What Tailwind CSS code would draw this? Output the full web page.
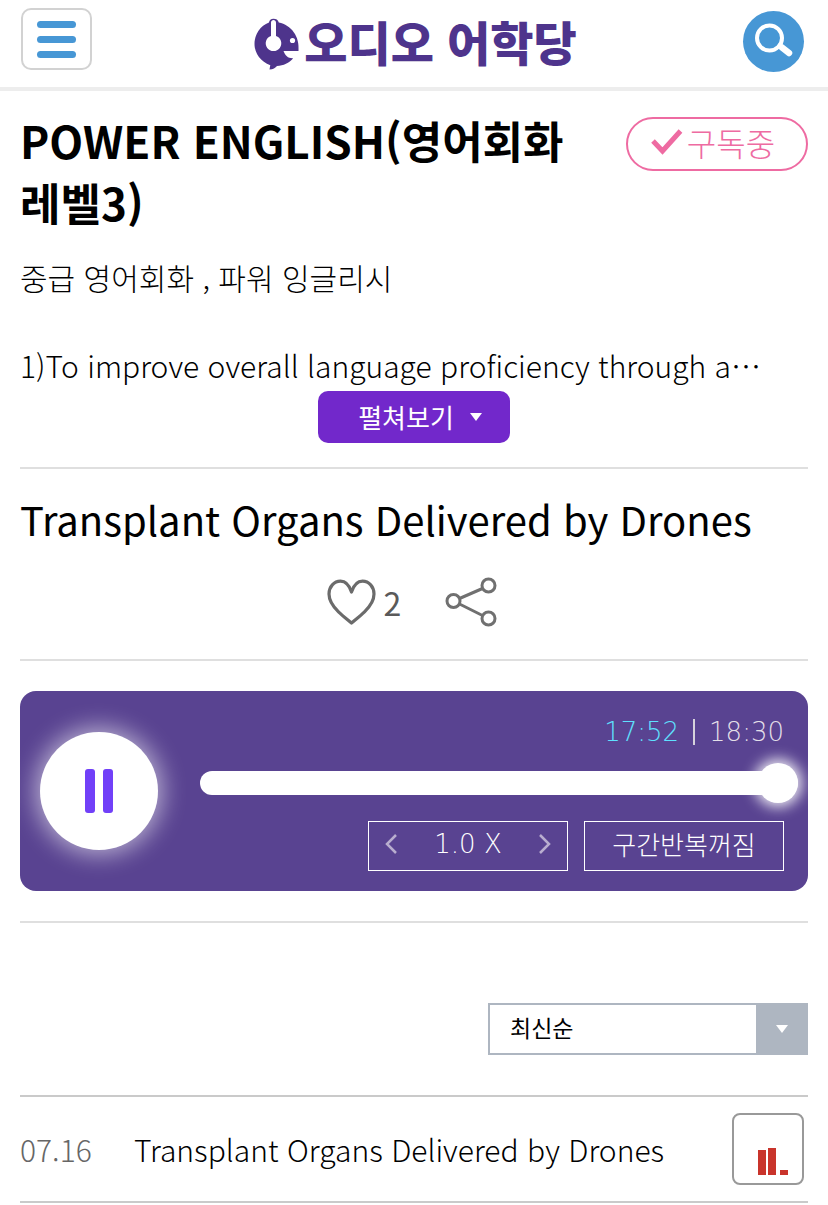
<!DOCTYPE html>
<html lang="ko">
<head>
    <meta charset="UTF-8">
    <meta name="viewport" content="width=device-width, initial-scale=1.0">
    <title>오디오 어학당</title>
    <script src="https://cdn.jsdelivr.net/npm/@tailwindcss/browser@4"></script>
</head>
<body class="bg-white text-black font-['Noto_Sans_CJK_KR',sans-serif]">
    <!-- Header -->
    <header class="flex items-start justify-between h-[91px] pt-2 pl-[21px] pr-6 border-b-4 border-[#ededed]">
        <button type="button" aria-label="메뉴" class="flex flex-col items-center justify-center gap-2 w-[71px] h-[62px] rounded-[10px] border-2 border-[#d2d2d2]">
            <span class="w-[39px] h-[7px] rounded-full bg-[#4797d5]"></span>
            <span class="w-[39px] h-[7px] rounded-full bg-[#4797d5]"></span>
            <span class="w-[39px] h-[7px] rounded-full bg-[#4797d5]"></span>
        </button>
        <a href="#" class="flex items-start gap-1 pt-2 pr-1 text-[#4e348c]">
            <svg class="mt-[2px] w-[46px] h-[53px]" viewBox="0 0 46 53" aria-hidden="true">
                <path fill="currentColor" d="M15 4.600C6.500 7.700.5 16.300.5 26c0 9.500 6.500 18 15.800 21.200l-.8 4.300c3.500-.3 6-1.700 7.500-3.600 6.600-.2 12-3 16.200-7.700-5 .3-8-2.400-9.700-7.200h15c1.500-15-7.500-26-19.700-28.600C24 1.800 22 .7 19.500.7S15.200 2 15 4.600z"/>
                <path fill="#fff" d="M17 4.800c0-3.600 5-3.600 5 0v13.100a7.800 7.800 0 1 1-5 0z"/>
                <circle cx="38.500" cy="22.500" r="2.600" fill="#fff"/>
            </svg>
            <span class="text-[47px] leading-[50px] font-black">오디오 어학당</span>
        </a>
        <button type="button" aria-label="검색" class="mt-[3px] w-[61px] h-[61px] rounded-full bg-[#4797d5]">
            <svg class="w-full h-full" viewBox="0 0 61 61" fill="none" stroke="#fff">
                <circle cx="26.500" cy="27" r="12.500" stroke-width="4"/>
                <path stroke-width="3.500" d="M35 33.500l4 3.500"/>
                <path stroke-width="6.500" stroke-linecap="round" d="M39 36.500l7 5.500"/>
            </svg>
        </button>
    </header>

    <main class="px-5">
        <!-- Course info -->
        <section class="pt-[18px] pb-6 border-b-2 border-[#dfdfdf]">
            <div class="flex items-start justify-between">
                <h1 class="w-[560px] text-[44px] leading-[62px] font-bold">POWER ENGLISH(영어회화 레벨3)</h1>
                <button type="button" class="flex items-center justify-center gap-1 mt-2 pr-2 pb-1 w-[182px] h-[54px] rounded-full border-2 border-[#ee6ba2] text-[32px] leading-[48px] font-light text-[#ee6ba2]">
                    <svg class="w-8 h-8" viewBox="0 0 32 32" fill="none" stroke="currentColor" stroke-width="5"><path d="M2 15l9.500 10L29.500 5"/></svg>
                    구독중
                </button>
            </div>
            <p class="mt-[22px] text-[30px] leading-[44px] font-light">중급 영어회화 , 파워 잉글리시</p>
            <p class="mt-11 pb-1 text-[30px] leading-[44px] font-light">1)To improve overall language proficiency through a…</p>
            <button type="button" class="flex items-center justify-center gap-4 mx-auto pl-3 w-[192px] h-[52px] rounded-[10px] bg-[#7228cb] text-[26px] leading-[52px] text-white">
                펼쳐보기
                <svg class="w-3 h-2" viewBox="0 0 12 8" fill="currentColor"><path d="M0 0h12L6 8z"/></svg>
            </button>
        </section>

        <!-- Episode -->
        <section class="pt-5 pb-8 border-b-2 border-[#dfdfdf]">
            <h2 class="text-[40px] leading-[60px]">Transplant Organs Delivered by Drones</h2>
            <div class="flex items-center justify-center gap-11 mt-7 pr-1">
                <button type="button" class="flex items-center gap-2 text-[32px] leading-[50px] text-[#5a5a5a]">
                    <svg class="w-[49px] h-[46px]" viewBox="0 0 49 46" fill="none" stroke="#6b6b6b" stroke-width="3.200" stroke-linejoin="round"><path d="M24.500 13C22 5.500 18 2.200 13.500 2.200 7 2.200 2 7.800 2 15c0 7 3.500 12 9.500 17.800 4 3.900 8.500 7.400 13 11.200 4.500-3.800 9-7.300 13-11.200C43.500 27 47 22 47 15c0-7.200-5-12.800-11.500-12.800-4.500 0-8.500 3.300-11 10.800z"/></svg>
                    2
                </button>
                <button type="button" aria-label="공유">
                    <svg class="w-[52px] h-[50px]" viewBox="0 0 52 50" fill="none" stroke="#707070" stroke-width="3">
                        <circle cx="8.500" cy="24" r="6.500"/>
                        <circle cx="43.500" cy="8.500" r="6.500"/>
                        <circle cx="43.500" cy="41.500" r="6.500"/>
                        <path d="M14.500 21.500l23-10M14.500 27l23 11.500"/>
                    </svg>
                </button>
            </div>
        </section>

        <!-- Player -->
        <section class="py-[30px] border-b-2 border-[#dfdfdf]">
            <div class="flex items-center gap-[42px] h-[200px] pl-5 rounded-2xl bg-[#594391] text-white">
                <button type="button" aria-label="일시정지" class="flex shrink-0 items-center justify-center gap-2 w-[118px] h-[118px] rounded-full bg-white shadow-[0_0_24px_4px_rgba(255,255,255,0.6)]">
                    <span class="w-[10px] h-11 rounded-[3px] bg-[#7140f8]"></span>
                    <span class="w-[10px] h-11 rounded-[3px] bg-[#7140f8]"></span>
                </button>
                <div class="grow pr-[10px] pt-1">
                    <div class="flex items-center justify-end gap-[14px] pr-[14px] font-['DejaVu_Sans',sans-serif] font-extralight text-[26px] leading-[32px]">
                        <span class="text-[#5fe0ff]">17:52</span>
                        <span class="w-[2px] h-[26px] bg-[#d6d2dc]"></span>
                        <span class="text-[#e3dfe8]">18:30</span>
                    </div>
                    <input type="range" aria-label="재생 위치" min="0" max="100" value="100" class="block mt-[23px] w-full h-6 appearance-none rounded-full bg-white [&::-webkit-slider-thumb]:appearance-none [&::-webkit-slider-thumb]:w-10 [&::-webkit-slider-thumb]:h-10 [&::-webkit-slider-thumb]:rounded-full [&::-webkit-slider-thumb]:bg-white [&::-webkit-slider-thumb]:shadow-[0_0_14px_4px_rgba(255,255,255,0.9)]">
                    <div class="flex justify-end gap-4 mt-[26px] pr-[14px]">
                        <div class="flex items-center justify-between w-[200px] h-[50px] px-4 pb-1 border border-white">
                            <button type="button" aria-label="느리게">
                                <svg class="w-3 h-5" viewBox="0 0 12 20" fill="none" stroke="#b9aecf" stroke-width="2.500"><path d="M11 1L2 10l9 9"/></svg>
                            </button>
                            <span class="font-['DejaVu_Sans',sans-serif] font-extralight text-[26px] leading-[32px]">1.0 X</span>
                            <button type="button" aria-label="빠르게">
                                <svg class="w-3 h-5" viewBox="0 0 12 20" fill="none" stroke="#b9aecf" stroke-width="2.500"><path d="M1 1l9 9-9 9"/></svg>
                            </button>
                        </div>
                        <button type="button" class="w-[200px] h-[50px] pb-1 border border-white text-[26px] leading-[44px] font-light">구간반복꺼짐</button>
                    </div>
                </div>
            </div>
        </section>

        <!-- Episode list -->
        <section class="pt-20">
            <div class="flex justify-end">
                <div class="relative w-[320px]">
                    <select aria-label="정렬" class="block w-full h-[52px] pl-5 pb-1 appearance-none border-2 border-[#aeb6c1] bg-white text-[23px]">
                        <option>최신순</option>
                    </select>
                    <span class="absolute inset-y-0 right-0 flex items-center justify-center w-[52px] bg-[#aeb6c1] pointer-events-none">
                        <svg class="w-3 h-2" viewBox="0 0 12 8" fill="#fff"><path d="M0 0h12L6 8z"/></svg>
                    </span>
                </div>
            </div>
            <ul class="mt-10 border-t-2 border-[#cacaca]">
                <li class="flex items-center h-[106px] pr-1 border-b-2 border-[#cacaca]">
                    <time class="w-[114px] text-[30px] leading-[44px] font-light text-[#666]">07.16</time>
                    <a href="#" class="grow text-[30px] leading-[44px] font-light">Transplant Organs Delivered by Drones</a>
                    <button type="button" aria-label="재생 중" class="flex items-end gap-[2px] w-[72px] h-[72px] pl-6 pb-2 rounded-lg border-2 border-[#999]">
                        <span class="w-2 h-[25px] bg-[#c9342b]"></span>
                        <span class="w-2 h-[27px] bg-[#c9342b]"></span>
                        <span class="ml-[2px] w-2 h-[5px] bg-[#c9342b]"></span>
                    </button>
                </li>
            </ul>
        </section>
    </main>
</body>
</html>
